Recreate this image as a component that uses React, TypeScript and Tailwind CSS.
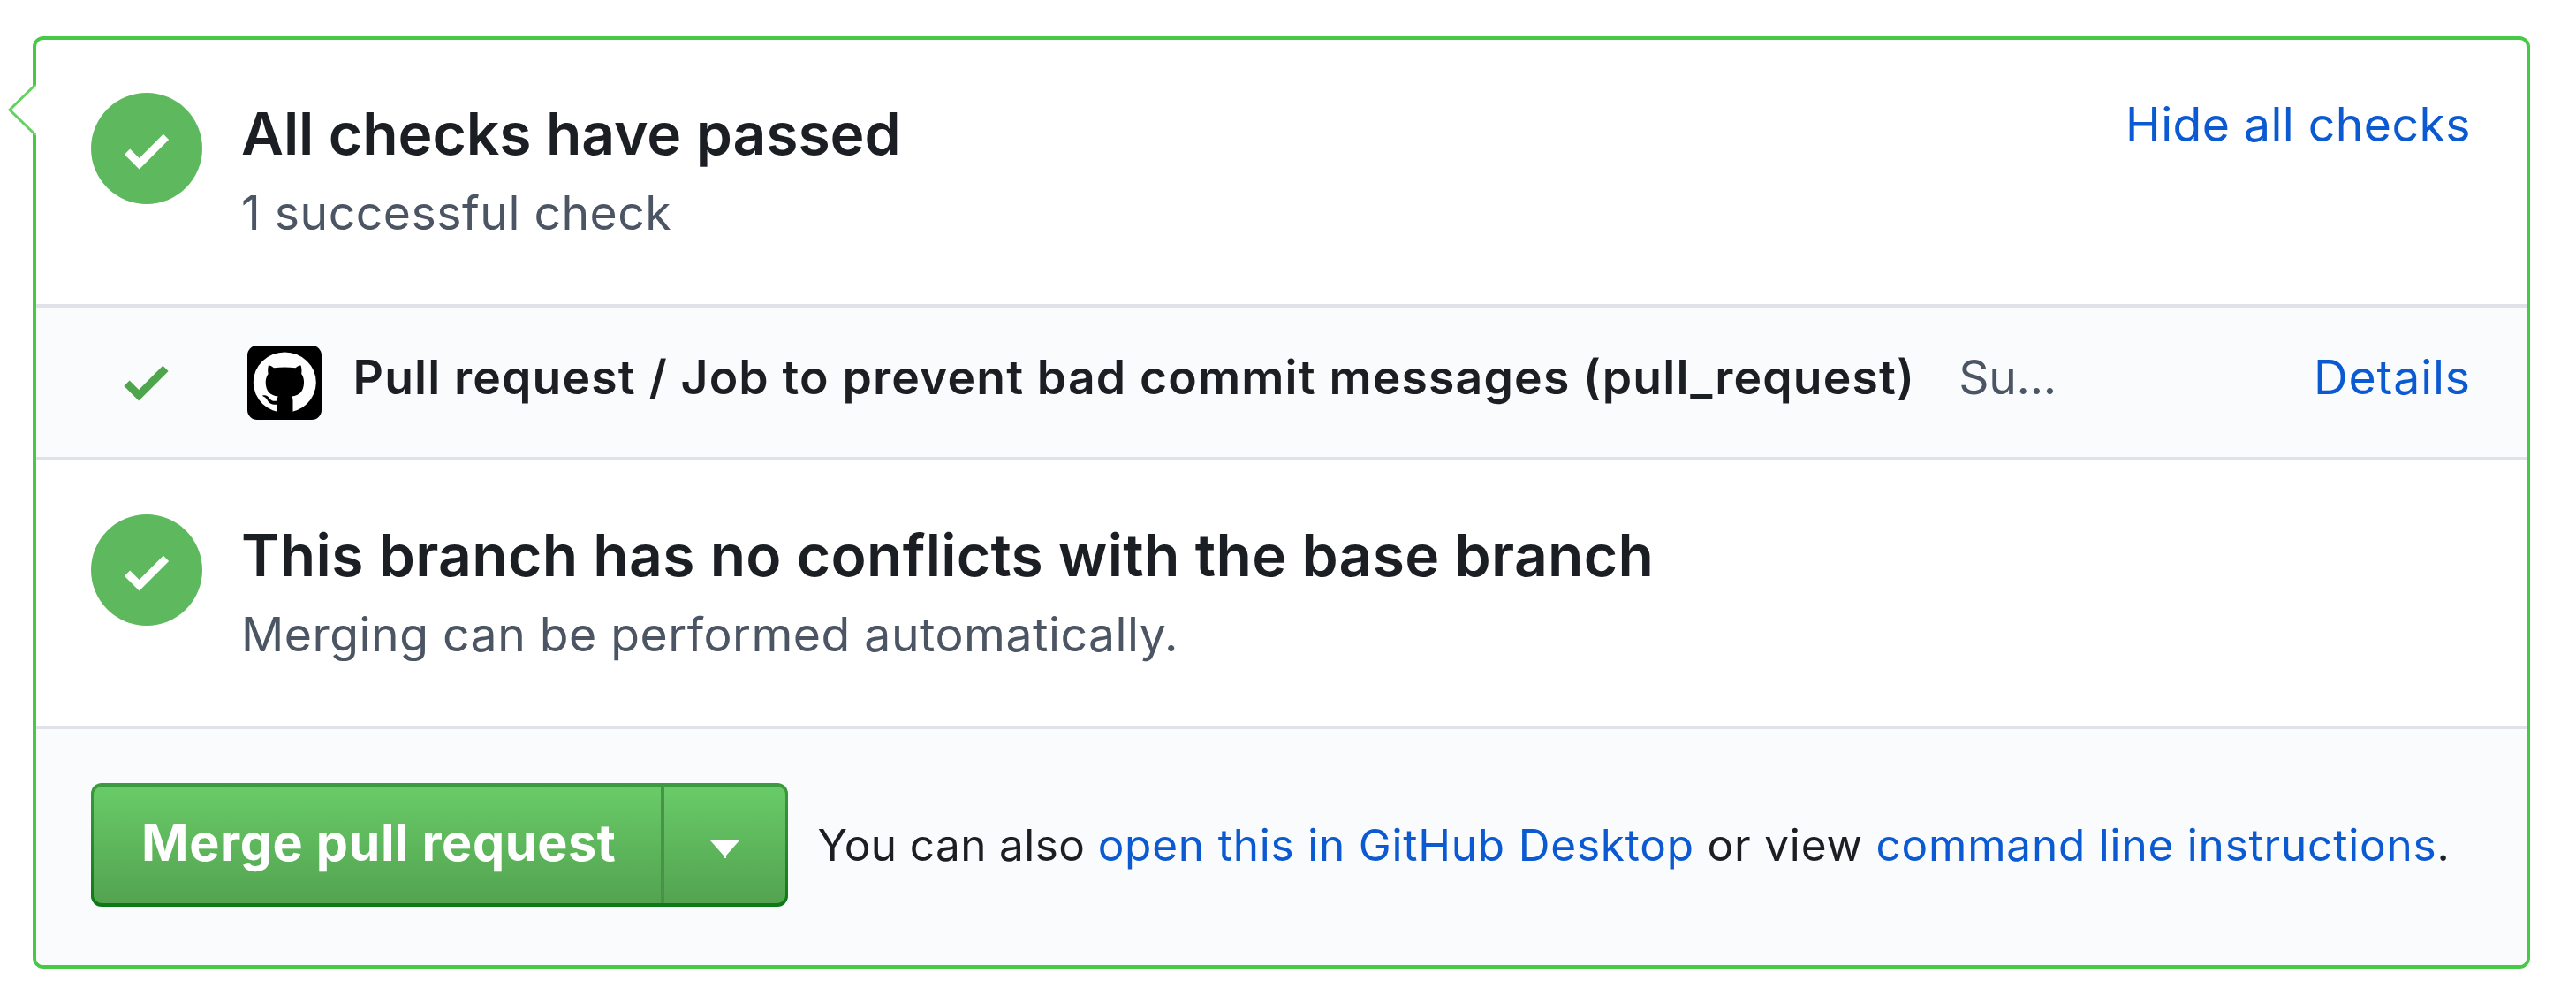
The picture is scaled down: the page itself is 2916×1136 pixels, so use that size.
import type { ReactNode } from "react";

function CheckMark({ className }: { className: string }) {
  return (
    <svg viewBox="0 0 12 16" className={className} fill="currentColor" aria-hidden="true">
      <path d="M12 5l-8 8-4-4 1.5-1.5L4 10l6.5-6.5z" />
    </svg>
  );
}

function StatusBadge() {
  return (
    <div className="flex size-[126px] shrink-0 items-center justify-center rounded-full bg-[#5eb95e] pt-1 text-white">
      <CheckMark className="h-[67px] w-[52px]" />
    </div>
  );
}

function StatusText({ title, detail }: { title: ReactNode; detail: string }) {
  return (
    <div className="ml-[44.5px] mt-[5.5px] flex flex-col gap-[17px]">
      {title}
      <p className="text-[53.5px] leading-[66px] tracking-[0.5px] text-[#4b5563]">{detail}</p>
    </div>
  );
}

function Avatar() {
  return (
    <div className="mt-[43px] size-[84px] shrink-0 overflow-hidden rounded-[11px] bg-black">
      <svg viewBox="0 0 84 84" className="size-full" aria-hidden="true">
        <ellipse cx="42.3" cy="41.7" rx="35.5" ry="34.2" fill="#fff" />
        <path
          d="M23.9 22.6C25.5 22.2 28 23.6 30 25.2C38 24.2 46.5 24.2 54.5 25.2C56.5 23.6 59 22.2 60.6 22.6C61.6 26 61.7 29 61.2 32C63.3 35 64.2 38.5 64 42C63.7 52 59 56.5 50.3 57.5Q51.5 59 51.5 62V78H33.5V66.8C27.5 67.2 24.500 65.5 22.5 61.5C21 58.8 19 58 16.8 56.7C20.5 55.2 23.5 57.3 25.2 59.7C27.5 62.8 30 63.3 33.5 62.5Q33.5 59 34.7 57.5C26 56.5 21 52 20.7 42C20.6 38.5 21.6 35 23.6 32C23 29 23 26 23.9 22.6Z"
          fill="#000"
        />
      </svg>
    </div>
  );
}

function MergeButton() {
  return (
    <div className="flex h-[140px] w-[789px] shrink-0 rounded-[12px] bg-linear-to-b from-[#3c9a40] to-[#0c7816] px-[3px] py-[4px]">
      <div className="flex w-full rounded-[9px] bg-linear-to-b from-[#69cb68] to-[#53a350] text-white">
        <button className="w-[642px] pl-[54px] pt-[23px] pb-[29px] text-left text-[57.5px] leading-[80px] font-bold tracking-[0.6px] whitespace-nowrap">
          Merge pull request
        </button>
        <div className="w-1 bg-[#4a914b]" />
        <button className="flex flex-1 justify-center pt-[61px]" aria-label="Select merge method">
          <svg viewBox="0 0 33 20" className="h-5 w-[33px]" fill="currentColor" aria-hidden="true">
            <path d="M0 0h33L18 17v3h-3v-3z" />
          </svg>
        </button>
      </div>
    </div>
  );
}

export default function App() {
  return (
    <div className="h-[1136px] w-[2916px] bg-white pl-[37px] pt-[41px] font-['Inter',sans-serif] text-[#1b1f24]">
      <section className="relative flex h-[1055px] w-[2827px] flex-col rounded-[12px] border-4 border-[#46ca46] bg-white">
        <svg viewBox="0 0 36 62" className="absolute -left-[33px] top-[48px] h-[62px] w-9" aria-hidden="true">
          <path d="M36 3h-3L3 31.3 33 60h3z" fill="#fff" />
          <path d="M32 3L3 31.3 32 59.5" fill="none" stroke="#63d163" strokeWidth="3" />
        </svg>

        <div className="flex h-[303px] items-start border-b-4 border-[#dfe2e8] pl-[61.5px] pr-[63px] pt-[60px]">
          <StatusBadge />
          <StatusText
            title={<h3 className="text-[66px] leading-[80px] font-semibold tracking-[-0.1px]">All checks have passed</h3>}
            detail="1 successful check"
          />
          <a className="ml-auto mt-[3px] text-[53.5px] leading-[66px] tracking-[0.45px] text-[#0b5ad2]">Hide all checks</a>
        </div>

        <div className="flex h-[173px] items-start border-b-4 border-[#dfe2e8] bg-[#fafbfd] pl-[99px] pr-[63px]">
          <CheckMark className="mt-[51px] h-[67px] w-[51px] text-[#4fa54d]" />
          <div className="ml-[89px]">
            <Avatar />
          </div>
          <strong className="ml-[35.5px] mt-[46px] text-[53.5px] leading-[66px] font-semibold tracking-[1.15px] whitespace-nowrap">
            Pull request / Job to prevent bad commit messages (pull_request)
          </strong>
          <span className="ml-[49px] mt-[46px] text-[53.5px] leading-[66px] tracking-[-0.3px] text-[#4b5563]">Su...</span>
          <a className="ml-auto mt-[46px] text-[53.5px] leading-[66px] tracking-[0.9px] text-[#0b5ad2]">Details</a>
        </div>

        <div className="flex h-[304px] items-start border-b-4 border-[#dfe2e8] pl-[61.5px] pt-[61px]">
          <StatusBadge />
          <StatusText
            title={
              <h3 className="text-[66px] leading-[80px] font-semibold tracking-[0.3px]">
                This branch has no conflicts with the base branch
              </h3>
            }
            detail="Merging can be performed automatically."
          />
        </div>

        <div className="flex flex-1 items-start rounded-b-[8px] bg-[#fafbfd] pl-[62px] pt-[61px]">
          <MergeButton />
          <p className="ml-[33.5px] mt-[37px] text-[49.5px] leading-[66px] tracking-[0.8px] whitespace-nowrap">
            <span className="tracking-[0.4px]">You can also </span>
            <a className="text-[#0b5ad2]">open this in GitHub Desktop</a> or view{" "}
            <a className="text-[#0b5ad2]">command line instructions</a>.
          </p>
        </div>
      </section>
    </div>
  );
}
